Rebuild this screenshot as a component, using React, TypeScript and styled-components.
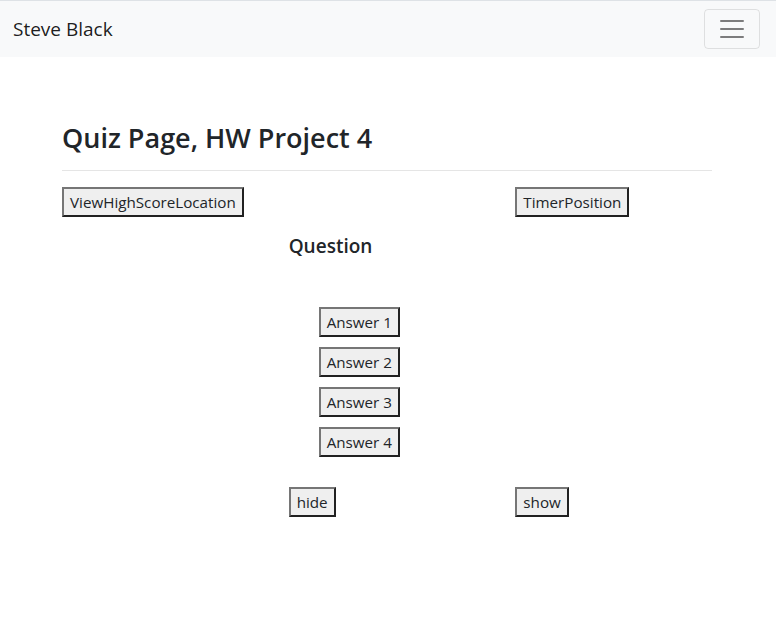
import React, { useState } from "react";
import styled, { createGlobalStyle } from "styled-components";

const GlobalStyle = createGlobalStyle`
  html, body {
    margin: 0;
    padding: 0;
    background: #fff;
  }
  body {
    font-family: "Open Sans", "Noto Sans", "Liberation Sans", sans-serif;
    font-size: 16px;
    line-height: 1.5;
    color: #212529;
  }
`;

const Navbar = styled.nav`
  display: flex;
  align-items: center;
  justify-content: space-between;
  height: 56px;
  padding: 0 16px 0 13px;
  background: #f8f9fa;
  border-top: 1px solid #dee2e6;
`;

const Brand = styled.span`
  font-size: 19px;
  line-height: 1.5;
  color: rgba(0, 0, 0, 0.9);
`;

const Toggler = styled.button`
  display: flex;
  align-items: center;
  justify-content: center;
  width: 56px;
  height: 40px;
  padding: 0;
  background: transparent;
  border: 1px solid rgba(0, 0, 0, 0.1);
  border-radius: 4px;
  cursor: pointer;
`;

const Main = styled.main`
  padding: 0 64px 0 62px;
`;

const Title = styled.h3`
  margin: 64px 0 0;
  font-size: 27px;
  font-weight: 600;
  line-height: 33px;
`;

const Rule = styled.hr`
  margin: 16px 0;
  border: 0;
  border-top: 1px solid rgba(0, 0, 0, 0.1);
`;

const Row = styled.div<{ $top?: number }>`
  display: grid;
  grid-template-columns: repeat(3, 1fr);
  column-gap: 30px;
  align-items: start;
  margin-top: ${(p) => p.$top ?? 0}px;
`;

const Cell = styled.div`
  display: flex;
  flex-direction: column;
  align-items: flex-start;
`;

const Question = styled.h5`
  margin: 0;
  font-size: 19px;
  font-weight: 600;
  line-height: 24px;
`;

const Answers = styled.div`
  display: flex;
  flex-direction: column;
  align-items: flex-start;
  gap: 10px;
  margin-top: 49px;
  padding-left: 30px;
`;

const Btn = styled.button`
  margin: 0;
  padding: 1px 6px;
  font-family: inherit;
  font-size: 15.2px;
  line-height: 24px;
  color: #212529;
  background: #efefef;
  border: 2px outset #767676;
  border-radius: 0;
  cursor: pointer;
`;

const MenuIcon = () => (
  <svg width="30" height="30" viewBox="0 0 30 30">
    <path
      d="M4 7h22M4 15h22M4 23h22"
      stroke="rgba(0,0,0,0.5)"
      strokeWidth="2"
      strokeLinecap="round"
      strokeMiterlimit="10"
    />
  </svg>
);

const App: React.FC = () => {
  const [visible, setVisible] = useState(true);

  return (
    <>
      <GlobalStyle />
      <Navbar>
        <Brand>Steve Black</Brand>
        <Toggler aria-label="Toggle navigation">
          <MenuIcon />
        </Toggler>
      </Navbar>

      <Main>
        <Title>Quiz Page, HW Project 4</Title>
        <Rule />

        <Row>
          <Cell>
            <Btn>ViewHighScoreLocation</Btn>
          </Cell>
          <Cell />
          <Cell>
            <Btn>TimerPosition</Btn>
          </Cell>
        </Row>

        <Row $top={17}>
          <Cell />
          <Cell>
            <Question>Question</Question>
            {visible && (
              <Answers>
                {[1, 2, 3, 4].map((n) => (
                  <Btn key={n}>Answer {n}</Btn>
                ))}
              </Answers>
            )}
          </Cell>
          <Cell />
        </Row>

        <Row $top={30}>
          <Cell />
          <Cell>
            <Btn onClick={() => setVisible(false)}>hide</Btn>
          </Cell>
          <Cell>
            <Btn onClick={() => setVisible(true)}>show</Btn>
          </Cell>
        </Row>
      </Main>
    </>
  );
};

export default App;
